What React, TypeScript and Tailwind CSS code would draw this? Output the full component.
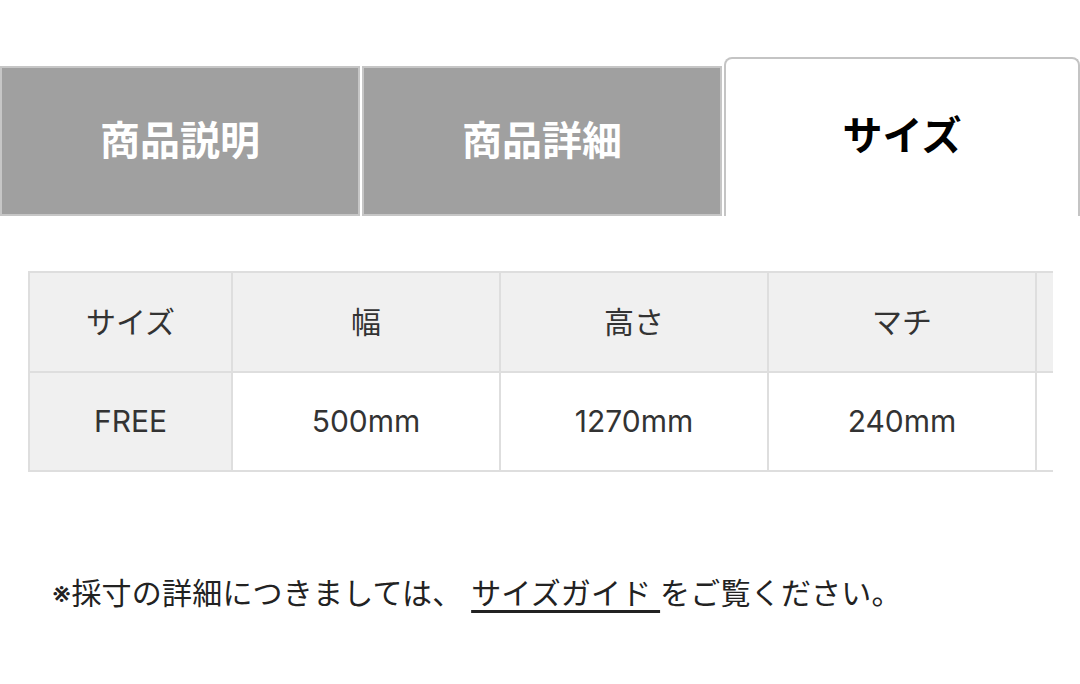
// Product info tabs with the size table open

const FONT = "font-['Inter','Noto_Sans_CJK_JP',sans-serif]"

const TABS = ['商品説明', '商品詳細', 'サイズ']
const ACTIVE = 2

const HEAD = ['サイズ', '幅', '高さ', 'マチ', '']
const ROW = ['FREE', '500mm', '1270mm', '240mm', '']
const WIDTHS = ['w-[203px]', 'w-[268px]', 'w-[268px]', 'w-[268px]', 'w-[268px]']

function Tabs() {
  return (
    <div className="flex h-[160px] items-end">
      {TABS.map((label, i) =>
        i === ACTIVE ? (
          <div
            key={label}
            className="flex h-[159px] w-[356px] items-center justify-center rounded-t-[8px] border-2 border-b-0 border-[#c4c4c4] bg-white pb-[4px] text-[40px] font-bold text-black"
          >
            {label}
          </div>
        ) : (
          <div
            key={label}
            className="mr-[2px] flex h-[150px] w-[360px] items-center justify-center border-2 border-[#c6c6c6] bg-[#a0a0a0] text-[40px] font-bold text-white"
          >
            {label}
          </div>
        ),
      )}
    </div>
  )
}

function SizeTable() {
  const cell = 'border-2 border-[#dedede] text-center align-middle font-normal'
  return (
    <div className="ml-[28px] mt-[55px] w-[1025px] overflow-hidden">
      <table className="w-[1275px] table-fixed border-collapse text-[30px] text-[#333]">
        <colgroup>
          {WIDTHS.map((w, i) => (
            <col key={i} className={w} />
          ))}
        </colgroup>
        <tbody>
          <tr className="h-[100px] bg-[#f0f0f0]">
            {HEAD.map((h, i) => (
              <th key={i} className={cell}>
                {h}
              </th>
            ))}
          </tr>
          <tr className="h-[99px]">
            {ROW.map((v, i) => (
              <td
                key={i}
                className={[cell, i === 0 ? 'bg-[#f0f0f0]' : 'bg-white'].join(' ')}
              >
                {v}
              </td>
            ))}
          </tr>
        </tbody>
      </table>
    </div>
  )
}

export default function App() {
  return (
    <div className={`h-[684px] w-[1080px] overflow-hidden bg-white pt-[56px] ${FONT}`}>
      <Tabs />
      <SizeTable />
      <p className="ml-[52px] mt-[101px] text-[30px] leading-[40px] tracking-[0.2px] text-[#222]">
        ※採寸の詳細につきましては、{' '}
        <span className="underline decoration-[3px] underline-offset-[6px]">サイズガイド </span>
        をご覧ください。
      </p>
    </div>
  )
}
